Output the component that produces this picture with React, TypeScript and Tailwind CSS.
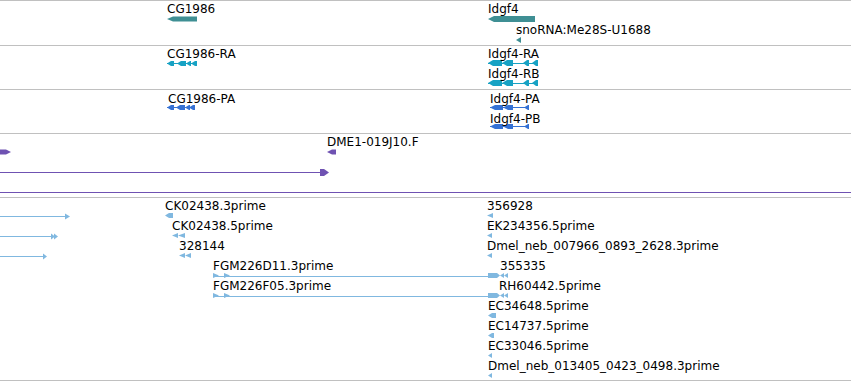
import React from "react";

type Label = { text: string; x: number; y: number }; // y = cap top, page coords

const TEAL = "#3f8f94";
const CYAN = "#17a2c4";
const BLUE = "#3571d4";
const PURPLE = "#6f52b2";
const LIGHT = "#80b8e0";

// left-pointing block with tapered tip
function arrowL(x0: number, x1: number, y0: number, y1: number, tip = 4) {
  const m = (y0 + y1) / 2;
  return `${x0},${m} ${x0 + tip},${y0} ${x1},${y0} ${x1},${y1} ${x0 + tip},${y1}`;
}

function arrowR(x0: number, x1: number, y0: number, y1: number, tip = 4) {
  const m = (y0 + y1) / 2;
  return `${x0},${y0} ${x1 - tip},${y0} ${x1},${m} ${x1 - tip},${y1} ${x0},${y1}`;
}

function Track({
  origin,
  height,
  className,
  labels,
  children,
}: {
  origin: number;
  height: number;
  className: string;
  labels: Label[];
  children: React.ReactNode;
}) {
  return (
    <div className={`relative ${className}`}>
      <svg
        className="absolute inset-0"
        width={851}
        height={height}
        viewBox={`0 ${origin} 851 ${height}`}
      >
        {children}
      </svg>
      {labels.map((l) => (
        <div
          key={l.text}
          className="absolute whitespace-nowrap text-[12px] leading-[14px] text-black"
          style={{ left: l.x, top: l.y - 2 - origin }}
        >
          {l.text}
        </div>
      ))}
    </div>
  );
}

export default function App() {
  return (
    <div className="w-[851px] h-[381px] overflow-hidden bg-white font-['DejaVu_Sans',sans-serif]">
      {/* genes */}
      <Track
        origin={1}
        height={44}
        className="h-[45px] border-t border-[#c0c0c0]"
        labels={[
          { text: "CG1986", x: 167, y: 4 },
          { text: "Idgf4", x: 488, y: 4 },
          { text: "snoRNA:Me28S-U1688", x: 516, y: 25 },
        ]}
      >
        <g fill={TEAL}>
          <polygon points={arrowL(167, 197, 16.5, 21.5, 6)} />
          <polygon points={arrowL(488, 535, 16, 22, 6)} />
          <polygon points="516,40 521,37 521,43" />
        </g>
      </Track>

      {/* transcripts */}
      <Track
        origin={46}
        height={43}
        className="h-[44px] border-t border-[#c0c0c0]"
        labels={[
          { text: "CG1986-RA", x: 167, y: 49 },
          { text: "Idgf4-RA", x: 488, y: 49 },
          { text: "Idgf4-RB", x: 488, y: 69 },
        ]}
      >
        <g fill={CYAN} stroke={CYAN}>
          <line x1={167} x2={197} y1={63.5} y2={63.5} strokeWidth={1} />
          <g stroke="none">
            <polygon points={arrowL(167, 174, 61, 66)} />
            <polygon points={arrowL(177, 186, 61, 66)} />
            <polygon points={arrowL(186, 191, 61, 66)} />
            <polygon points={arrowL(191, 197, 61, 66)} />
          </g>
          {[60, 80].map((y) => (
            <g key={y}>
              <line x1={488} x2={536} y1={y + 3.5} y2={y + 3.5} strokeWidth={1} />
              <g stroke="none">
                <polygon points={arrowL(488, 502, y, y + 6, 5)} />
                <polygon points={arrowL(502, 513, y, y + 6, 5)} />
                <polygon points={arrowL(523, 529, y, y + 6, 4)} />
                <polygon points={arrowL(532, 538, y, y + 6, 4)} />
              </g>
            </g>
          ))}
        </g>
      </Track>

      {/* proteins */}
      <Track
        origin={90}
        height={43}
        className="h-[44px] border-t border-[#c0c0c0]"
        labels={[
          { text: "CG1986-PA", x: 168, y: 94 },
          { text: "Idgf4-PA", x: 490, y: 94 },
          { text: "Idgf4-PB", x: 490, y: 114 },
        ]}
      >
        <g fill={BLUE} stroke={BLUE}>
          <line x1={167} x2={195} y1={107.5} y2={107.5} strokeWidth={1} />
          <g stroke="none">
            <polygon points={arrowL(167, 174, 105, 110)} />
            <polygon points={arrowL(176, 185, 105, 110)} />
            <polygon points={arrowL(185, 190, 105, 110)} />
            <polygon points={arrowL(189, 195, 105, 110)} />
          </g>
          {[105, 124].map((y) => (
            <g key={y}>
              <line x1={490} x2={529} y1={y + 2.5} y2={y + 2.5} strokeWidth={1} />
              <g stroke="none">
                <polygon points={arrowL(490, 503, y, y + 5, 5)} />
                <polygon points={arrowL(503, 513, y, y + 5, 5)} />
                <polygon points={arrowL(524, 529, y, y + 5, 4)} />
              </g>
            </g>
          ))}
        </g>
      </Track>

      {/* ESTs (purple) */}
      <Track
        origin={134}
        height={63}
        className="h-[64px] border-t border-[#c0c0c0]"
        labels={[{ text: "DME1-019J10.F", x: 327, y: 137 }]}
      >
        <g fill={PURPLE} stroke={PURPLE}>
          <g stroke="none">
            <polygon points={arrowR(0, 11, 149.5, 154.5, 5)} />
            <polygon points={arrowL(327, 336, 149.5, 154.5, 5)} />
            <polygon points="320,169 324,169 329,172.5 324,176 320,176" />
          </g>
          <line x1={0} x2={322} y1={172.5} y2={172.5} strokeWidth={1} />
          <line x1={0} x2={851} y1={192.5} y2={192.5} strokeWidth={1} />
        </g>
      </Track>

      {/* cDNA / EST alignments */}
      <Track
        origin={198}
        height={182}
        className="h-[184px] border-y border-[#c0c0c0]"
        labels={[
          { text: "CK02438.3prime", x: 165, y: 201 },
          { text: "CK02438.5prime", x: 172, y: 221 },
          { text: "328144", x: 179, y: 241 },
          { text: "FGM226D11.3prime", x: 213, y: 261 },
          { text: "FGM226F05.3prime", x: 213, y: 281 },
          { text: "356928", x: 487, y: 201 },
          { text: "EK234356.5prime", x: 487, y: 221 },
          { text: "Dmel_neb_007966_0893_2628.3prime", x: 487, y: 241 },
          { text: "355335", x: 500, y: 261 },
          { text: "RH60442.5prime", x: 499, y: 281 },
          { text: "EC34648.5prime", x: 488, y: 301 },
          { text: "EC14737.5prime", x: 488, y: 321 },
          { text: "EC33046.5prime", x: 488, y: 341 },
          { text: "Dmel_neb_013405_0423_0498.3prime", x: 488, y: 361 },
        ]}
      >
        <g fill={LIGHT} stroke={LIGHT}>
          <line x1={0} x2={66} y1={216.5} y2={216.5} strokeWidth={1} />
          <line x1={0} x2={52} y1={236.5} y2={236.5} strokeWidth={1} />
          <line x1={0} x2={43} y1={256.5} y2={256.5} strokeWidth={1} />
          <line x1={213} x2={489} y1={276.5} y2={276.5} strokeWidth={1} />
          <line x1={213} x2={489} y1={296.5} y2={296.5} strokeWidth={1} />
          <g stroke="none">
            <polygon points="65,213.5 70,216.5 65,219.5" />
            <polygon points="51,233.5 55,236.5 51,239.5" />
            <polygon points="54,233.5 58,236.5 54,239.5" />
            <polygon points="43,253.5 47,256.5 43,259.5" />

            <polygon points={arrowL(165, 173, 213, 218, 4)} />
            <polygon points="172,235.5 178,233 178,238" />
            <polygon points="178,235.5 185,233 185,238" />
            <polygon points="179,255.5 185,253 185,258" />
            <polygon points="185,255.5 191,253 191,258" />

            {[273, 293].map((y) => (
              <g key={y}>
                <polygon points={`213,${y} 219,${y + 2.5} 213,${y + 5}`} />
                <polygon points={`224,${y} 230,${y + 2.5} 224,${y + 5}`} />
                <polygon points={arrowR(488, 500, y, y + 5, 3)} />
                <polygon points={`500,${y + 2.5} 504,${y} 504,${y + 5}`} />
                <polygon points={`504,${y + 2.5} 508,${y} 508,${y + 5}`} />
              </g>
            ))}

            <polygon points="487,215.5 493,213 493,218" />
            <polygon points="487,235.5 492,233 492,238" />
            <polygon points="487,255.5 492,253 492,258" />
            <polygon points={arrowL(488, 496, 313, 318, 4)} />
            <polygon points={arrowL(488, 494, 333, 338, 4)} />
            <polygon points="488,355.5 492,353 492,358" />
            <polygon points="488,375.5 492,373 492,378" />
          </g>
        </g>
      </Track>
    </div>
  );
}
